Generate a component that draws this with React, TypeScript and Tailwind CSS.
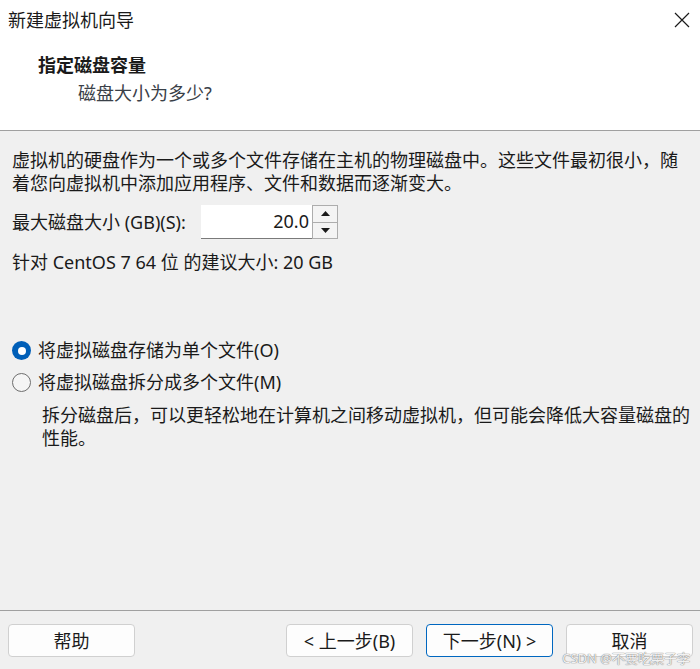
import React from "react";

const font = { fontFamily: '"Noto Sans", "Noto Sans CJK SC", sans-serif' };

const Radio = ({ checked }: { checked?: boolean }) =>
  checked ? (
    <span className="w-[19px] h-[19px] rounded-full bg-[#005fb8] flex items-center justify-center shrink-0">
      <span className="w-[8px] h-[8px] rounded-full bg-white" />
    </span>
  ) : (
    <span className="w-[19px] h-[19px] rounded-full border border-[#6e6e6e] bg-[#f5f5f5] shrink-0" />
  );

const Button = ({ label, primary }: { label: string; primary?: boolean }) => (
  <button
    className={
      primary
        ? "w-[127px] h-[33px] rounded-[4px] border border-[#0067c0] bg-[#fdfdfd] text-[18px] text-[#1a1a1a] leading-none"
        : "w-[127px] h-[33px] rounded-[4px] border border-[#d0d0d0] bg-[#fdfdfd] text-[18px] text-[#1a1a1a] leading-none"
    }
  >
    {label}
  </button>
);

export default function App() {
  return (
    <div
      className="w-[700px] h-[669px] bg-[#f0f0f0] flex flex-col relative overflow-hidden text-[#1a1a1a]"
      style={font}
    >
      <div className="h-[131px] bg-white border-b border-[#a0a0a0] shrink-0">
        <div className="flex justify-between items-start pl-[8px] pr-[10px] pt-[8px]">
          <div className="text-[18px] leading-[24px]">新建虚拟机向导</div>
          <svg width="16" height="16" viewBox="0 0 16 16" className="mt-[4px]">
            <path d="M1 1L15 15M15 1L1 15" stroke="#1a1a1a" strokeWidth="1.2" />
          </svg>
        </div>
        <div className="pl-[38px] mt-[21px] text-[18px] leading-[24px] font-bold">指定磁盘容量</div>
        <div className="pl-[78px] mt-[4px] text-[18px] leading-[24px] text-[#3a4048]">磁盘大小为多少?</div>
      </div>

      <div className="flex-1 px-[12px] pt-[18px] text-[18px] leading-[23px]">
        <div className="whitespace-nowrap">虚拟机的硬盘作为一个或多个文件存储在主机的物理磁盘中。这些文件最初很小，随</div>
        <div className="whitespace-nowrap">着您向虚拟机中添加应用程序、文件和数据而逐渐变大。</div>

        <div className="flex items-center mt-[10px]">
          <span className="w-[189px] whitespace-nowrap">最大磁盘大小 (GB)(S):</span>
          <div className="flex h-[34px]">
            <div className="w-[111px] bg-white border-b border-[#7a7a7a] flex items-center justify-end pr-[3px] text-[18px]">
              20.0
            </div>
            <div className="w-[26px] flex flex-col border border-[#adadad] bg-[#f4f4f4]">
              <div className="flex-1 flex items-center justify-center border-b border-[#adadad]">
                <svg width="9" height="5" viewBox="0 0 9 5">
                  <path d="M0 5L4.5 0L9 5Z" fill="#1a1a1a" />
                </svg>
              </div>
              <div className="flex-1 flex items-center justify-center">
                <svg width="9" height="5" viewBox="0 0 9 5">
                  <path d="M0 0L4.5 5L9 0Z" fill="#1a1a1a" />
                </svg>
              </div>
            </div>
          </div>
        </div>

        <div className="mt-[12px] whitespace-nowrap">针对 CentOS 7 64 位 的建议大小: 20 GB</div>

        <div className="flex items-center gap-[7px] mt-[65px]">
          <Radio checked />
          <span className="whitespace-nowrap">将虚拟磁盘存储为单个文件(O)</span>
        </div>
        <div className="flex items-center gap-[7px] mt-[9px]">
          <Radio />
          <span className="whitespace-nowrap">将虚拟磁盘拆分成多个文件(M)</span>
        </div>
        <div className="pl-[30px] mt-[10px]">
          <div className="whitespace-nowrap">拆分磁盘后，可以更轻松地在计算机之间移动虚拟机，但可能会降低大容量磁盘的</div>
          <div className="whitespace-nowrap">性能。</div>
        </div>
      </div>

      <div className="h-[59px] border-t border-[#a0a0a0] shrink-0 flex items-start justify-between pt-[13px] pl-[8px] pr-[7px]">
        <Button label="帮助" />
        <div className="flex gap-[13px]">
          <Button label="< 上一步(B)" />
          <Button label="下一步(N) >" primary />
          <Button label="取消" />
        </div>
      </div>

      <div className="absolute right-[10px] bottom-[3px] text-[13px] leading-[16px] text-white/90 [text-shadow:0_0_1px_#777,0_0_1px_#777]">
        CSDN @不要吃栗子李
      </div>
    </div>
  );
}
